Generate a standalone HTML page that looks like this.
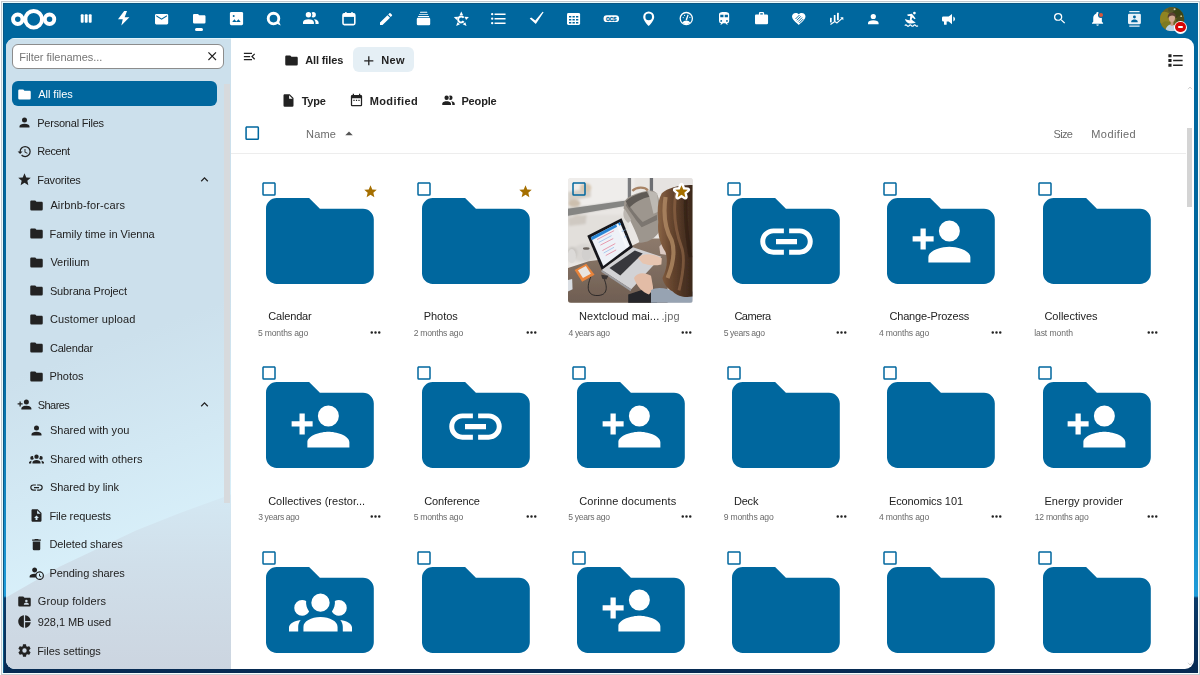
<!DOCTYPE html>
<html><head><meta charset="utf-8"><title>Files - Nextcloud</title>
<style>
*{box-sizing:border-box;margin:0;padding:0}
html,body{width:1200px;height:675px;overflow:hidden}
body{position:relative;font-family:"Liberation Sans",sans-serif;font-size:11px;color:#222;background:#00679e}
.ic{position:absolute;display:block;overflow:visible}
.abs{position:absolute}
.t{position:absolute;white-space:nowrap;filter:grayscale(1)}
#bg{position:absolute;left:0;top:0;width:1200px;height:675px;background:linear-gradient(180deg,#00679e 0,#00679e 360px,#1f9cd9 596px,#0b3b69 598px,#072a52 675px)}
#nav{position:absolute;left:6px;top:37.5px;width:225px;height:631.5px;border-radius:9px 0 0 9px;overflow:hidden;background:#cce0ec}
#nav:after{content:'';position:absolute;left:0;top:0;width:225px;height:1.2px;background:rgba(230,246,253,.8)}
#main{position:absolute;left:231px;top:37.5px;width:963px;height:631.5px;border-radius:0 9px 9px 0;background:#fff;overflow:hidden}
</style></head><body>
<div id="bg"></div>

<svg class="ic" style="left:11.1px;top:8.8px;width:45.3px;height:20.6px" viewBox="0 0 75.44 34.32"><g fill="none" stroke="#fff" stroke-width="6.54"><circle cx="37.77" cy="17.16" r="13.89"/><circle cx="11.24" cy="17.16" r="7.87"/><circle cx="64.2" cy="17.16" r="7.87"/></g></svg>
<svg class="ic" style="left:0;top:0;width:1200px;height:37.5px" viewBox="0 0 1200 37.5"><rect x="80.75" y="14.3" width="2.9" height="8.4" rx=".9" fill="#fff"/><rect x="84.75" y="14.3" width="2.9" height="8.4" rx=".9" fill="#fff"/><rect x="88.75" y="14.3" width="2.9" height="8.4" rx=".9" fill="#fff"/><rect x="229.9" y="12" width="13.2" height="13.2" rx="1.4" fill="#fff"/><circle cx="233.7" cy="16" r="1" fill="#00679e"/><path d="M232.2,22.1 L234.4,19.2 L236.3,21.6 L238.5,19.2 L240.7,22.1Z" fill="#00679e"/><circle cx="273.5" cy="18.6" r="5.3" fill="none" stroke="#fff" stroke-width="2.9"/><path d="M275.8,23.2 L280.7,25.4 L278.6,20.4Z" fill="#fff"/><rect x="343" y="13.7" width="11.8" height="10.9" rx="1.3" fill="none" stroke="#fff" stroke-width="1.6"/><rect x="343" y="13.7" width="11.8" height="3.2" fill="#fff"/><rect x="345" y="12" width="1.6" height="2.5" rx=".4" fill="#fff"/><rect x="351.2" y="12" width="1.6" height="2.5" rx=".4" fill="#fff"/><rect x="416.8" y="17.7" width="13.4" height="7.6" rx="1.2" fill="#fff"/><rect x="417.9" y="15.95" width="11.3" height=".95" rx=".4" fill="#fff"/><rect x="418.9" y="13.9" width="9.3" height=".95" rx=".4" fill="#fff"/><rect x="420" y="11.85" width="7.3" height=".95" rx=".4" fill="#fff"/><g fill="#fff"><path d="M461.3,11.6 L463.1,15.2 L459.5,15.2Z"/><path d="M453.8,16.9 L458.2,16.7 L456.6,19.9Z"/><path d="M468.9,16.9 L464.5,16.7 L466.1,19.9Z"/><path d="M456.2,25.9 L457.4,22.3 L460,24.2Z"/><path d="M466.5,25.9 L465.3,22.3 L462.7,24.2Z"/></g><path d="M463.6,17.7 A3,3 0 1 0 463.6,21.1" fill="none" stroke="#fff" stroke-width="2"/><path d="M529.7,18.6 L531.2,17.4 L535.3,20.6 L542.6,11.8 L543.6,12.3 L535.8,24Z" fill="#fff"/><rect x="567" y="13.1" width="13.1" height="11.9" rx="1.4" fill="#fff"/><rect x="569.0" y="16.0" width="2.3" height="1.5" fill="#00679e"/><rect x="569.0" y="19.0" width="2.3" height="1.5" fill="#00679e"/><rect x="569.0" y="22.0" width="2.3" height="1.5" fill="#00679e"/><rect x="572.5" y="16.0" width="2.3" height="1.5" fill="#00679e"/><rect x="572.5" y="19.0" width="2.3" height="1.5" fill="#00679e"/><rect x="572.5" y="22.0" width="2.3" height="1.5" fill="#00679e"/><rect x="576.0" y="16.0" width="2.3" height="1.5" fill="#00679e"/><rect x="576.0" y="19.0" width="2.3" height="1.5" fill="#00679e"/><rect x="576.0" y="22.0" width="2.3" height="1.5" fill="#00679e"/><rect x="603.5" y="15.3" width="15.6" height="6.7" rx="3.35" fill="#fff"/><text x="611.3" y="20.6" font-family="Liberation Sans" font-weight="bold" font-size="5.7" text-anchor="middle" fill="#00679e" stroke="#00679e" stroke-width=".35" textLength="10.6" lengthAdjust="spacingAndGlyphs">OCS</text><path d="M648.7,11.4 A5.5,5.5 0 0 1 654.2,16.9 C654.2,20.6 648.7,26 648.7,26 C648.7,26 643.2,20.6 643.2,16.9 A5.5,5.5 0 0 1 648.7,11.4Z M648.7,13.6 A3.3,3.3 0 1 0 648.7,20.2 A3.3,3.3 0 1 0 648.7,13.6Z" fill="#fff" fill-rule="evenodd"/><circle cx="686.3" cy="18.6" r="6.1" fill="none" stroke="#fff" stroke-width="1.3"/><path d="M682.3,22.6 A5,5 0 0 1 690.3,22.6 A5.4,5.4 0 0 1 682.3,22.6Z" fill="#fff"/><path d="M685.6,19.8 L687.6,14.6 L688.6,15 L687,20.3Z" fill="#fff"/><circle cx="683.2" cy="17.6" r=".55" fill="#fff"/><circle cx="684.6" cy="15.4" r=".55" fill="#fff"/><circle cx="689.9" cy="17.4" r=".55" fill="#fff"/><g fill="#fff"><rect x="830" y="17.8" width="1.7" height="4.6" rx=".5"/><rect x="833.8" y="15" width="1.7" height="6" rx=".5"/><rect x="837" y="12.7" width="1.8" height="7.5" rx=".5"/></g><path d="M830.8,24.2 L834.8,21.4 L837,22.9 L841.8,18.6" fill="none" stroke="#fff" stroke-width="1.2" stroke-linejoin="round" stroke-linecap="round"/><path d="M840.2,17.2 L843.3,17.2 L843.3,20.3Z" fill="#fff"/><g fill="#fff"><circle cx="914.4" cy="13.1" r="1.35"/><path d="M907.2,14.6 L911.8,13.8 L913.4,15.6 L915.6,18.6 L914.7,19.2 L912.4,17.4 L911.6,19.4 L913.3,21.6 L912.2,22.3 L909.8,19.9 L910.3,16 L907.8,15.9Z"/><path d="M904.9,18.9 C907,19.8 909.5,20.5 912,20.3 L915.8,22.5 C911,24.8 906,23.4 904.9,18.9Z"/><path d="M904.8,25.6 q1.1,-1.4 2.2,0 t2.2,0 t2.2,0 t2.2,0 t2.2,0 t2.1,0" fill="none" stroke="#fff" stroke-width="1.1"/></g></svg>
<svg class="ic" style="left:118.00px;top:11.40px;width:11.40px;height:14.60px" viewBox="2 1 12 14" preserveAspectRatio="none"><path fill="#fff" d="M8.5 1L2 9h5l-1.5 6L14 7H9l2.5-6z"/></svg>
<svg class="ic" style="left:154.80px;top:13.50px;width:13.20px;height:10.40px" viewBox="2 4 20 16" preserveAspectRatio="none"><path fill="#fff" d="M20,4H4C2.9,4 2,4.9 2,6V18C2,19.1 2.9,20 4,20H20C21.1,20 22,19.1 22,18V6C22,4.9 21.1,4 20,4M20,8L12,13L4,8V6L12,11L20,6V8Z"/></svg>
<svg class="ic" style="left:192.70px;top:13.90px;width:12.50px;height:9.40px" viewBox="2 4 20 16" preserveAspectRatio="none"><path fill="#fff" d="M10,4H4C2.89,4 2,4.89 2,6V18A2,2 0 0,0 4,20H20A2,2 0 0,0 22,18V8C22,6.89 21.1,6 20,6H12L10,4Z"/></svg>
<svg class="ic" style="left:303.40px;top:12.00px;width:15.60px;height:11.90px" viewBox="2 3.9999475479125977 20 15.000052452087402" preserveAspectRatio="none"><path fill="#fff" d="M16 17V19H2V17S2 13 9 13 16 17 16 17M12.5 7.5A3.5 3.5 0 1 0 9 11A3.5 3.5 0 0 0 12.5 7.5M15.94 13A5.32 5.32 0 0 1 18 17V19H22V17S22 13.37 15.94 13M15 4A3.39 3.39 0 0 0 13.07 4.59A5 5 0 0 1 13.07 10.41A3.39 3.39 0 0 0 15 11A3.5 3.5 0 0 0 15 4Z"/></svg>
<svg class="ic" style="left:380.00px;top:12.70px;width:12.20px;height:12.10px" viewBox="3 2.997499942779541 18.002500534057617 18.002500534057617" preserveAspectRatio="none"><path fill="#fff" d="M20.71,7.04C21.1,6.65 21.1,6 20.71,5.63L18.37,3.29C18,2.9 17.35,2.9 16.96,3.29L15.12,5.12L18.87,8.87M3,17.25V21H6.75L17.81,9.93L14.06,6.18L3,17.25Z"/></svg>
<svg class="ic" style="left:491.25px;top:13.00px;width:14.55px;height:11.30px" viewBox="2.5 4.5 18.5 15" preserveAspectRatio="none"><path fill="#fff" d="M7,5H21V7H7V5M7,13V11H21V13H7M4,4.5A1.5,1.5 0 0,1 5.5,6A1.5,1.5 0 0,1 4,7.5A1.5,1.5 0 0,1 2.5,6A1.5,1.5 0 0,1 4,4.5M4,10.5A1.5,1.5 0 0,1 5.5,12A1.5,1.5 0 0,1 4,13.5A1.5,1.5 0 0,1 2.5,12A1.5,1.5 0 0,1 4,10.5M7,19V17H21V19H7M4,16.5A1.5,1.5 0 0,1 5.5,18A1.5,1.5 0 0,1 4,19.5A1.5,1.5 0 0,1 2.5,18A1.5,1.5 0 0,1 4,16.5Z"/></svg>
<svg class="ic" style="left:718.80px;top:12.25px;width:10.20px;height:12.50px" viewBox="4 2 16 19" preserveAspectRatio="none"><path fill="#fff" d="M12,2C8,2 4,2.5 4,6V15.5A3.5,3.5 0 0,0 7.5,19L6,20.5V21H8.23L10.23,19H14L16,21H18V20.5L16.5,19A3.5,3.5 0 0,0 20,15.5V6C20,2.5 16.42,2 12,2M7.5,17A1.5,1.5 0 0,1 6,15.5A1.5,1.5 0 0,1 7.5,14A1.5,1.5 0 0,1 9,15.5A1.5,1.5 0 0,1 7.5,17M11,10H6V6H11V10M13,10V6H18V10H13M16.5,17A1.5,1.5 0 0,1 15,15.5A1.5,1.5 0 0,1 16.5,14A1.5,1.5 0 0,1 18,15.5A1.5,1.5 0 0,1 16.5,17Z"/></svg>
<svg class="ic" style="left:754.75px;top:12.00px;width:13.05px;height:12.20px" viewBox="2 2 20 19" preserveAspectRatio="none"><path fill="#fff" d="M10,2H14A2,2 0 0,1 16,4V6H20A2,2 0 0,1 22,8V19A2,2 0 0,1 20,21H4C2.89,21 2,20.1 2,19V8C2,6.89 2.89,6 4,6H8V4C8,2.89 8.89,2 10,2M14,6V4H10V6H14Z"/></svg>
<svg class="ic" style="left:792.10px;top:12.80px;width:13.50px;height:11.95px" viewBox="2 3 20 18.350000381469727" preserveAspectRatio="none"><path fill="#fff" d="M12,21.35L10.55,20.03C5.4,15.36 2,12.27 2,8.5C2,5.41 4.42,3 7.5,3C9.24,3 10.91,3.81 12,5.08C13.09,3.81 14.76,3 16.5,3C19.58,3 22,5.41 22,8.5C22,12.27 18.6,15.36 13.45,20.03L12,21.35Z"/></svg>
<svg class="ic" style="left:0;top:0;width:1200px;height:37.5px" viewBox="0 0 1200 37.5"><g stroke="#00679e" stroke-width=".95"><path d="M795.5,19 L799.5,15"/><path d="M796.8,20.3 L800.8,16.3"/><path d="M798.1,21.6 L802.1,17.6"/><path d="M799.4,22.9 L803.2,19.1"/></g></svg>
<svg class="ic" style="left:868.40px;top:13.70px;width:10.60px;height:10.20px" viewBox="4 4 16 16" preserveAspectRatio="none"><path fill="#fff" d="M12,4A4,4 0 0,1 16,8A4,4 0 0,1 12,12A4,4 0 0,1 8,8A4,4 0 0,1 12,4M12,14C16.42,14 20,15.79 20,18V20H4V18C4,15.79 7.58,14 12,14Z"/></svg>
<svg class="ic" style="left:942.00px;top:13.70px;width:13.00px;height:10.80px" viewBox="2 4 19.5 17" preserveAspectRatio="none"><path fill="#fff" d="M12,8H4A2,2 0 0,0 2,10V14A2,2 0 0,0 4,16H5V20A1,1 0 0,0 6,21H8A1,1 0 0,0 9,20V16H12L17,20V4L12,8M21.5,12C21.5,13.71 20.54,15.26 19,16V8C20.53,8.75 21.5,10.3 21.5,12Z"/></svg>
<div class="abs" style="left:195px;top:28px;width:7.7px;height:3.2px;border-radius:1.6px;background:#fff"></div>
<svg class="ic" style="left:1053.80px;top:13.30px;width:11.20px;height:10.60px" viewBox="3 3 17.5 17.5" preserveAspectRatio="none"><path fill="#fff" d="M9.5,3A6.5,6.5 0 0,1 16,9.5C16,11.11 15.41,12.59 14.44,13.73L14.71,14H15.5L20.5,19L19,20.5L14,15.5V14.71L13.73,14.44C12.59,15.41 11.11,16 9.5,16A6.5,6.5 0 0,1 3,9.5A6.5,6.5 0 0,1 9.5,3M9.5,5C7,5 5,7 5,9.5C5,12 7,14 9.5,14C12,14 14,12 14,9.5C14,7 12,5 9.5,5Z"/></svg>
<svg class="ic" style="left:1091.80px;top:12.30px;width:11.10px;height:13.70px" viewBox="3 2 18 21" preserveAspectRatio="none"><path fill="#fff" d="M21,19V20H3V19L5,17V11C5,7.9 7.03,5.17 10,4.29C10,4.19 10,4.1 10,4A2,2 0 0,1 12,2A2,2 0 0,1 14,4C14,4.1 14,4.19 14,4.29C16.97,5.17 19,7.9 19,11V17L21,19M14,21A2,2 0 0,1 12,23A2,2 0 0,1 10,21"/></svg>
<div class="abs" style="left:1098.7px;top:13.2px;width:4.3px;height:4.3px;border-radius:3px;background:#d8563a;box-shadow:0 0 0 1px #00679e"></div>
<svg class="ic" style="left:1128.30px;top:10.75px;width:12.90px;height:15.75px" viewBox="2 0 20 24" preserveAspectRatio="none"><path fill="#eaf2f8" d="M20,0H4V2H20V0M4,24H20V22H4V24M20,4H4A2,2 0 0,0 2,6V18A2,2 0 0,0 4,20H20A2,2 0 0,0 22,18V6A2,2 0 0,0 20,4M12,6.75A2.25,2.25 0 0,1 14.25,9A2.25,2.25 0 0,1 12,11.25A2.25,2.25 0 0,1 9.75,9A2.25,2.25 0 0,1 12,6.75M17,17H7V15.5C7,13.83 10.33,13 12,13C13.67,13 17,13.83 17,15.5V17Z"/></svg>
<svg class="ic" style="left:1160.1px;top:6.5px;width:24.2px;height:24.4px" viewBox="0 0 24 24"><defs><clipPath id="av"><circle cx="12" cy="12" r="12"/></clipPath><filter id="avb" x="-20%" y="-20%" width="140%" height="140%"><feGaussianBlur stdDeviation=".55"/></filter></defs><g clip-path="url(#av)"><rect width="24" height="24" fill="#6a6424"/><g filter="url(#avb)"><circle cx="4.5" cy="11" r="6.5" fill="#8f8424"/><circle cx="6" cy="19" r="5" fill="#7d7a22"/><circle cx="18" cy="5" r="6" fill="#3a4419"/><circle cx="20.5" cy="13" r="4.5" fill="#4a4c1e"/><circle cx="11" cy="2.5" r="3" fill="#55592a"/><circle cx="14.5" cy="2.2" r="1" fill="#d9d6b0"/><circle cx="21" cy="9" r=".9" fill="#cfc98f"/><path d="M5.2,24 C6,19 9,17.2 12,17.4 C15.5,17.6 18,19.5 18.8,24Z" fill="#bdd2e2"/><path d="M10.4,14 L13.4,14 L13.2,18.4 L10.6,18.4Z" fill="#c59a80"/><ellipse cx="11.8" cy="10.6" rx="3.1" ry="4.2" fill="#d2aa92"/><path d="M7.8,11.2 C6.4,3.6 17,3.2 15.9,11.2 C15,7.4 9.4,7.2 7.8,11.2Z" fill="#5a4130"/></g></g></svg>
<div class="abs" style="left:1174px;top:20.5px;width:13px;height:13px;border-radius:50%;background:#fff"></div>
<div class="abs" style="left:1175.3px;top:21.8px;width:10.4px;height:10.4px;border-radius:50%;background:#d60505"></div>
<div class="abs" style="left:1177.7px;top:26.05px;width:5.6px;height:1.9px;border-radius:.9px;background:#fff"></div>
<div id="nav">
<div class="abs" style="left:0;top:0;width:225px;height:631.5px;background:linear-gradient(160deg,#cce0ec 0,#cce0ec 48%,#d9f1fb 82%)"></div>
<svg class="ic" style="left:0;top:0;width:225px;height:631.5px" viewBox="6 37.5 225 631.5"><defs><linearGradient id="ng" x1="0" y1="0" x2="0" y2="1"><stop offset="0" stop-color="#d4e8f3"/><stop offset=".4" stop-color="#d0dfea"/><stop offset="1" stop-color="#ccd5e0"/></linearGradient></defs><path d="M6,597 L60,566 L136,530 L180,512.5 L224,496.5 L231,494 V669 H6Z" fill="url(#ng)"/></svg>
</div>
<div class="abs" style="left:224px;top:83.8px;width:5.9px;height:418.8px;background:#d7dadd"></div>
<div class="abs" style="left:12.3px;top:43.75px;width:212.2px;height:25px;border-radius:6px;border:1.2px solid #8c8c8c;background:#fff"></div>
<div class="t" style="left:19.20px;top:48.79px;line-height:16px;height:16px;font-size:11px;color:#757575;letter-spacing:-0.031px">Filter filenames...</div>
<svg class="ic" style="left:208.20px;top:52.40px;width:8.40px;height:8.40px" viewBox="5 5 14 14" preserveAspectRatio="none"><path fill="#222" d="M19,6.41L17.59,5L12,10.59L6.41,5L5,6.41L10.59,12L5,17.59L6.41,19L12,13.41L17.59,19L19,17.59L13.41,12L19,6.41Z"/></svg>
<div class="abs" style="left:12.3px;top:81.10px;width:204.5px;height:25.3px;border-radius:6px;background:#00679e"></div>
<svg class="ic" style="left:17.20px;top:86.50px;width:15px;height:15px" viewBox="0 0 24 24"><path fill="#fff" fill-rule="nonzero" d="M10,4H4C2.89,4 2,4.89 2,6V18A2,2 0 0,0 4,20H20A2,2 0 0,0 22,18V8C22,6.89 21.1,6 20,6H12L10,4Z"/></svg>
<div class="t" style="left:38.20px;top:86.09px;line-height:16px;height:16px;font-size:11px;color:#fff;letter-spacing:-0.025px">All files</div>
<svg class="ic" style="left:17.20px;top:115.00px;width:15px;height:15px" viewBox="0 0 24 24"><path fill="#222" fill-rule="nonzero" d="M12,4A4,4 0 0,1 16,8A4,4 0 0,1 12,12A4,4 0 0,1 8,8A4,4 0 0,1 12,4M12,14C16.42,14 20,15.79 20,18V20H4V18C4,15.79 7.58,14 12,14Z"/></svg>
<div class="t" style="left:37.20px;top:114.59px;line-height:16px;height:16px;font-size:11px;color:#222;letter-spacing:-0.219px">Personal Files</div>
<svg class="ic" style="left:17.20px;top:143.50px;width:15px;height:15px" viewBox="0 0 24 24"><path fill="#222" fill-rule="nonzero" d="M13.5,8H12V13L16.28,15.54L17,14.33L13.5,12.25V8M13,3A9,9 0 0,0 4,12H1L4.96,16.03L9,12H6A7,7 0 0,1 13,5A7,7 0 0,1 20,12A7,7 0 0,1 13,19C11.07,19 9.32,18.21 8.06,16.94L6.64,18.36C8.27,20 10.5,21 13,21A9,9 0 0,0 22,12A9,9 0 0,0 13,3"/></svg>
<div class="t" style="left:37.20px;top:143.09px;line-height:16px;height:16px;font-size:11px;color:#222;letter-spacing:-0.390px">Recent</div>
<svg class="ic" style="left:17.20px;top:172.00px;width:15px;height:15px" viewBox="0 0 24 24"><path fill="#222" fill-rule="nonzero" d="M12,17.27L18.18,21L16.54,13.97L22,9.24L14.81,8.62L12,2L9.19,8.62L2,9.24L7.45,13.97L5.82,21L12,17.27Z"/></svg>
<div class="t" style="left:37.20px;top:171.59px;line-height:16px;height:16px;font-size:11px;color:#222;letter-spacing:-0.200px">Favorites</div>
<svg class="ic" style="left:196.50px;top:171.60px;width:15px;height:15px" viewBox="0 0 24 24"><path fill="#222" fill-rule="nonzero" d="M7.41,15.41L12,10.83L16.59,15.41L18,14L12,8L6,14L7.41,15.41Z"/></svg>
<svg class="ic" style="left:29.20px;top:197.50px;width:15px;height:15px" viewBox="0 0 24 24"><path fill="#222" fill-rule="nonzero" d="M10,4H4C2.89,4 2,4.89 2,6V18A2,2 0 0,0 4,20H20A2,2 0 0,0 22,18V8C22,6.89 21.1,6 20,6H12L10,4Z"/></svg>
<div class="t" style="left:50.40px;top:197.09px;line-height:16px;height:16px;font-size:11px;color:#222;letter-spacing:0.129px">Airbnb-for-cars</div>
<svg class="ic" style="left:29.20px;top:226.00px;width:15px;height:15px" viewBox="0 0 24 24"><path fill="#222" fill-rule="nonzero" d="M10,4H4C2.89,4 2,4.89 2,6V18A2,2 0 0,0 4,20H20A2,2 0 0,0 22,18V8C22,6.89 21.1,6 20,6H12L10,4Z"/></svg>
<div class="t" style="left:49.40px;top:225.59px;line-height:16px;height:16px;font-size:11px;color:#222;letter-spacing:0.020px">Family time in Vienna</div>
<svg class="ic" style="left:29.20px;top:254.50px;width:15px;height:15px" viewBox="0 0 24 24"><path fill="#222" fill-rule="nonzero" d="M10,4H4C2.89,4 2,4.89 2,6V18A2,2 0 0,0 4,20H20A2,2 0 0,0 22,18V8C22,6.89 21.1,6 20,6H12L10,4Z"/></svg>
<div class="t" style="left:50.40px;top:254.09px;line-height:16px;height:16px;font-size:11px;color:#222;letter-spacing:-0.014px">Verilium</div>
<svg class="ic" style="left:29.20px;top:283.00px;width:15px;height:15px" viewBox="0 0 24 24"><path fill="#222" fill-rule="nonzero" d="M10,4H4C2.89,4 2,4.89 2,6V18A2,2 0 0,0 4,20H20A2,2 0 0,0 22,18V8C22,6.89 21.1,6 20,6H12L10,4Z"/></svg>
<div class="t" style="left:49.90px;top:282.59px;line-height:16px;height:16px;font-size:11px;color:#222;letter-spacing:-0.125px">Subrana Project</div>
<svg class="ic" style="left:29.20px;top:311.50px;width:15px;height:15px" viewBox="0 0 24 24"><path fill="#222" fill-rule="nonzero" d="M10,4H4C2.89,4 2,4.89 2,6V18A2,2 0 0,0 4,20H20A2,2 0 0,0 22,18V8C22,6.89 21.1,6 20,6H12L10,4Z"/></svg>
<div class="t" style="left:49.90px;top:311.09px;line-height:16px;height:16px;font-size:11px;color:#222;letter-spacing:0.121px">Customer upload</div>
<svg class="ic" style="left:29.20px;top:340.00px;width:15px;height:15px" viewBox="0 0 24 24"><path fill="#222" fill-rule="nonzero" d="M10,4H4C2.89,4 2,4.89 2,6V18A2,2 0 0,0 4,20H20A2,2 0 0,0 22,18V8C22,6.89 21.1,6 20,6H12L10,4Z"/></svg>
<div class="t" style="left:49.90px;top:339.59px;line-height:16px;height:16px;font-size:11px;color:#222;letter-spacing:-0.200px">Calendar</div>
<svg class="ic" style="left:29.20px;top:368.50px;width:15px;height:15px" viewBox="0 0 24 24"><path fill="#222" fill-rule="nonzero" d="M10,4H4C2.89,4 2,4.89 2,6V18A2,2 0 0,0 4,20H20A2,2 0 0,0 22,18V8C22,6.89 21.1,6 20,6H12L10,4Z"/></svg>
<div class="t" style="left:49.40px;top:368.09px;line-height:16px;height:16px;font-size:11px;color:#222;letter-spacing:-0.020px">Photos</div>
<svg class="ic" style="left:17.20px;top:397.00px;width:15px;height:15px" viewBox="0 0 24 24"><path fill="#222" fill-rule="nonzero" d="M15,14C12.33,14 7,15.33 7,18V20H23V18C23,15.33 17.67,14 15,14M6,10V7H4V10H1V12H4V15H6V12H9V10M15,12A4,4 0 0,0 19,8A4,4 0 0,0 15,4A4,4 0 0,0 11,8A4,4 0 0,0 15,12Z"/></svg>
<div class="t" style="left:37.70px;top:396.59px;line-height:16px;height:16px;font-size:11px;color:#222;letter-spacing:-0.540px">Shares</div>
<svg class="ic" style="left:196.50px;top:396.60px;width:15px;height:15px" viewBox="0 0 24 24"><path fill="#222" fill-rule="nonzero" d="M7.41,15.41L12,10.83L16.59,15.41L18,14L12,8L6,14L7.41,15.41Z"/></svg>
<svg class="ic" style="left:29.20px;top:422.70px;width:15px;height:15px" viewBox="0 0 24 24"><path fill="#222" fill-rule="nonzero" d="M12,4A4,4 0 0,1 16,8A4,4 0 0,1 12,12A4,4 0 0,1 8,8A4,4 0 0,1 12,4M12,14C16.42,14 20,15.79 20,18V20H4V18C4,15.79 7.58,14 12,14Z"/></svg>
<div class="t" style="left:49.90px;top:422.29px;line-height:16px;height:16px;font-size:11px;color:#222;letter-spacing:0.046px">Shared with you</div>
<svg class="ic" style="left:29.20px;top:451.20px;width:15px;height:15px" viewBox="0 0 24 24"><path fill="#222" fill-rule="nonzero" d="M12,5.5A3.5,3.5 0 0,1 15.5,9A3.5,3.5 0 0,1 12,12.5A3.5,3.5 0 0,1 8.5,9A3.5,3.5 0 0,1 12,5.5M5,8C5.56,8 6.08,8.15 6.53,8.42C6.38,9.85 6.8,11.27 7.66,12.38C7.16,13.34 6.16,14 5,14A3,3 0 0,1 2,11A3,3 0 0,1 5,8M19,8A3,3 0 0,1 22,11A3,3 0 0,1 19,14C17.84,14 16.84,13.34 16.34,12.38C17.2,11.27 17.62,9.85 17.47,8.42C17.92,8.15 18.44,8 19,8M5.5,18.25C5.5,16.18 8.41,14.5 12,14.5C15.59,14.5 18.5,16.18 18.5,18.25V20H5.5V18.25M0,20V18.5C0,17.11 1.89,15.94 4.45,15.6C3.86,16.28 3.5,17.22 3.5,18.25V20H0M24,20H20.5V18.25C20.5,17.22 20.14,16.28 19.55,15.6C22.11,15.94 24,17.11 24,18.5V20Z"/></svg>
<div class="t" style="left:49.90px;top:450.79px;line-height:16px;height:16px;font-size:11px;color:#222;letter-spacing:0.050px">Shared with others</div>
<svg class="ic" style="left:29.20px;top:479.70px;width:15px;height:15px" viewBox="0 0 24 24"><path fill="#222" fill-rule="nonzero" d="M3.9,12C3.9,10.29 5.29,8.9 7,8.9H11V7H7A5,5 0 0,0 2,12A5,5 0 0,0 7,17H11V15.1H7C5.29,15.1 3.9,13.71 3.9,12M8,13H16V11H8V13M17,7H13V8.9H17C18.71,8.9 20.1,10.29 20.1,12C20.1,13.71 18.71,15.1 17,15.1H13V17H17A5,5 0 0,0 22,12A5,5 0 0,0 17,7Z"/></svg>
<div class="t" style="left:49.90px;top:479.29px;line-height:16px;height:16px;font-size:11px;color:#222;letter-spacing:-0.042px">Shared by link</div>
<svg class="ic" style="left:29.20px;top:508.20px;width:15px;height:15px" viewBox="0 0 24 24"><path fill="#222" fill-rule="nonzero" d="M14,2H6C4.89,2 4,2.89 4,4V20C4,21.11 4.89,22 6,22H18C19.11,22 20,21.11 20,20V8L14,2M13.5,16V19H10.5V16H8L12,12L16,16H13.5M13,9V3.5L18.5,9H13Z"/></svg>
<div class="t" style="left:49.40px;top:507.79px;line-height:16px;height:16px;font-size:11px;color:#222;letter-spacing:-0.112px">File requests</div>
<svg class="ic" style="left:29.20px;top:536.70px;width:15px;height:15px" viewBox="0 0 24 24"><path fill="#222" fill-rule="nonzero" d="M19,4H15.5L14.5,3H9.5L8.5,4H5V6H19M6,19A2,2 0 0,0 8,21H16A2,2 0 0,0 18,19V7H6V19Z"/></svg>
<div class="t" style="left:49.40px;top:536.29px;line-height:16px;height:16px;font-size:11px;color:#222;letter-spacing:-0.050px">Deleted shares</div>
<svg class="ic" style="left:29.20px;top:565.20px;width:15px;height:15px" viewBox="0 0 24 24"><path fill="#222" fill-rule="nonzero" d="M10.63,14.1C12.23,10.58 16.38,9.03 19.9,10.63C23.42,12.23 24.97,16.38 23.37,19.9C22.24,22.4 19.75,24 17,24C14.3,24 11.83,22.44 10.67,20H1V18C1.06,16.86 1.84,15.93 3.34,15.18C4.84,14.43 6.72,14.04 9,14C9.57,14 10.11,14.05 10.63,14.1V14.1M9,4C10.12,4.03 11.06,4.42 11.81,5.17C12.56,5.92 12.93,6.86 12.93,8C12.93,9.14 12.56,10.08 11.81,10.83C11.06,11.58 10.12,11.95 9,11.95C7.88,11.95 6.94,11.58 6.19,10.83C5.44,10.08 5.07,9.14 5.07,8C5.07,6.86 5.44,5.92 6.19,5.17C6.94,4.42 7.88,4.03 9,4M17,22A5,5 0 0,0 22,17A5,5 0 0,0 17,12A5,5 0 0,0 12,17A5,5 0 0,0 17,22M16,14H17.5V16.82L19.94,18.23L19.19,19.53L16,17.69V14Z"/></svg>
<div class="t" style="left:49.40px;top:564.79px;line-height:16px;height:16px;font-size:11px;color:#222;letter-spacing:-0.085px">Pending shares</div>
<svg class="ic" style="left:17.20px;top:593.50px;width:15px;height:15px" viewBox="0 0 24 24"><path fill="#222" fill-rule="nonzero" d="M19,17H11V16C11,14.67 13.67,14 15,14C16.33,14 19,14.67 19,16M15,9A2,2 0 0,1 17,11A2,2 0 0,1 15,13C13.89,13 13,12.1 13,11C13,9.89 13.9,9 15,9M20,6H12L10,4H4C2.89,4 2,4.89 2,6V18A2,2 0 0,0 4,20H20A2,2 0 0,0 22,18V8C22,6.89 21.1,6 20,6Z"/></svg>
<div class="t" style="left:37.70px;top:593.09px;line-height:16px;height:16px;font-size:11px;color:#222;letter-spacing:0.138px">Group folders</div>
<svg class="ic" style="left:17.20px;top:614.20px;width:15px;height:15px" viewBox="0 0 24 24"><path fill="#222" fill-rule="nonzero" d="M11,2V22C5.9,21.5 2,17.2 2,12C2,6.8 5.9,2.5 11,2M13,2V11H22C21.5,6.2 17.8,2.5 13,2M13,13V22C17.7,21.5 21.5,17.8 22,13H13Z"/></svg>
<div class="t" style="left:37.70px;top:613.79px;line-height:16px;height:16px;font-size:11px;color:#222;letter-spacing:-0.054px">928,1 MB used</div>
<svg class="ic" style="left:17.20px;top:643.00px;width:15px;height:15px" viewBox="0 0 24 24"><path fill="#222" fill-rule="nonzero" d="M12,15.5A3.5,3.5 0 0,1 8.5,12A3.5,3.5 0 0,1 12,8.5A3.5,3.5 0 0,1 15.5,12A3.5,3.5 0 0,1 12,15.5M19.43,12.97C19.47,12.65 19.5,12.33 19.5,12C19.5,11.67 19.47,11.34 19.43,11L21.54,9.37C21.73,9.22 21.78,8.95 21.66,8.73L19.66,5.27C19.54,5.05 19.27,4.96 19.05,5.05L16.56,6.05C16.04,5.66 15.5,5.32 14.87,5.07L14.5,2.42C14.46,2.18 14.25,2 14,2H10C9.75,2 9.54,2.18 9.5,2.42L9.13,5.07C8.5,5.32 7.96,5.66 7.44,6.05L4.95,5.05C4.73,4.96 4.46,5.05 4.34,5.27L2.34,8.73C2.21,8.95 2.27,9.22 2.46,9.37L4.57,11C4.53,11.34 4.5,11.67 4.5,12C4.5,12.33 4.53,12.65 4.57,12.97L2.46,14.63C2.27,14.78 2.21,15.05 2.34,15.27L4.34,18.73C4.46,18.95 4.73,19.03 4.95,18.95L7.44,17.94C7.96,18.34 8.5,18.68 9.13,18.93L9.5,21.58C9.54,21.82 9.75,22 10,22H14C14.25,22 14.46,21.82 14.5,21.58L14.87,18.93C15.5,18.67 16.04,18.34 16.56,17.94L19.05,18.95C19.27,19.03 19.54,18.95 19.66,18.73L21.66,15.27C21.78,15.05 21.73,14.78 21.54,14.63L19.43,12.97Z"/></svg>
<div class="t" style="left:37.20px;top:642.59px;line-height:16px;height:16px;font-size:11px;color:#222;letter-spacing:-0.042px">Files settings</div>
<div id="main"></div>
<svg class="ic" style="left:241.90px;top:48.90px;width:15px;height:15px" viewBox="0 0 24 24"><path fill="#222" fill-rule="nonzero" d="M21,15.61L19.59,17L14.58,12L19.59,7L21,8.39L17.44,12L21,15.61M3,6H16V8H3V6M3,13V11H13V13H3M3,18V16H16V18H3Z"/></svg>
<svg class="ic" style="left:284.20px;top:52.50px;width:15px;height:15px" viewBox="0 0 24 24"><path fill="#222" fill-rule="nonzero" d="M10,4H4C2.89,4 2,4.89 2,6V18A2,2 0 0,0 4,20H20A2,2 0 0,0 22,18V8C22,6.89 21.1,6 20,6H12L10,4Z"/></svg>
<div class="t" style="left:305.15px;top:52.49px;line-height:16px;height:16px;font-size:11px;color:#222;letter-spacing:-0.125px;font-weight:bold">All files</div>
<div class="abs" style="left:352.8px;top:47.2px;width:61px;height:25.3px;border-radius:6px;background:#e5eff5"></div>
<svg class="ic" style="left:360.50px;top:52.50px;width:15.6px;height:15.6px" viewBox="0 0 24 24"><path fill="#222" fill-rule="nonzero" d="M19,13H13V19H11V13H5V11H11V5H13V11H19V13Z"/></svg>
<div class="t" style="left:381.35px;top:52.49px;line-height:16px;height:16px;font-size:11px;color:#222;letter-spacing:0.250px;font-weight:bold">New</div>
<svg class="ic" style="left:1165.70px;top:50.50px;width:19px;height:19px" viewBox="0 0 24 24"><path fill="#222" fill-rule="nonzero" d="M3,4H7V8H3V4M9,5V7H21V5H9M3,10H7V14H3V10M9,11V13H21V11H9M3,16H7V20H3V16M9,17V19H21V17H9"/></svg>
<svg class="ic" style="left:280.70px;top:92.90px;width:15px;height:15px" viewBox="0 0 24 24"><path fill="#222" fill-rule="nonzero" d="M13,9V3.5L18.5,9M6,2C4.89,2 4,2.89 4,4V20A2,2 0 0,0 6,22H18A2,2 0 0,0 20,20V8L14,2H6Z"/></svg>
<div class="t" style="left:301.70px;top:92.99px;line-height:16px;height:16px;font-size:11px;color:#222;letter-spacing:-0.267px;font-weight:bold">Type</div>
<svg class="ic" style="left:349.35px;top:93.10px;width:15px;height:15px" viewBox="0 0 24 24"><path fill="#222" fill-rule="evenodd" d="M5,3H6V1H8V3H16V1H18V3H19A2,2 0 0 1 21,5V19A2,2 0 0 1 19,21H5A2,2 0 0 1 3,19V5A2,2 0 0 1 5,3Z M5,8.5V19H19V8.5Z M7,10.8H9V12.8H7Z M11,10.8H13V12.8H11Z M15,10.8H17V12.8H15Z"/></svg>
<div class="t" style="left:369.65px;top:92.99px;line-height:16px;height:16px;font-size:11px;color:#222;letter-spacing:0.421px;font-weight:bold">Modified</div>
<svg class="ic" style="left:441.00px;top:92.70px;width:15px;height:15px" viewBox="0 0 24 24"><path fill="#222" fill-rule="nonzero" d="M16 17V19H2V17S2 13 9 13 16 17 16 17M12.5 7.5A3.5 3.5 0 1 0 9 11A3.5 3.5 0 0 0 12.5 7.5M15.94 13A5.32 5.32 0 0 1 18 17V19H22V17S22 13.37 15.94 13M15 4A3.39 3.39 0 0 0 13.07 4.59A5 5 0 0 1 13.07 10.41A3.39 3.39 0 0 0 15 11A3.5 3.5 0 0 0 15 4Z"/></svg>
<div class="t" style="left:461.45px;top:92.99px;line-height:16px;height:16px;font-size:11px;color:#222;letter-spacing:-0.160px;font-weight:bold">People</div>
<svg class="ic" style="left:242.70px;top:124.40px;width:18.4px;height:18.4px" viewBox="0 0 24 24"><path fill="#00679e" fill-rule="nonzero" d="M19,3H5C3.89,3 3,3.89 3,5V19A2,2 0 0,0 5,21H19A2,2 0 0,0 21,19V5C21,3.89 20.1,3 19,3M19,5V19H5V5H19Z"/></svg>
<div class="t" style="left:306.00px;top:126.09px;line-height:16px;height:16px;font-size:11px;color:#6b6b6b;letter-spacing:0.200px">Name</div>
<svg class="ic" style="left:339.60px;top:124.20px;width:18px;height:18px" viewBox="0 0 24 24"><path fill="#555" fill-rule="nonzero" d="M7,15L12,10L17,15H7Z"/></svg>
<div class="t" style="left:1053.60px;top:126.09px;line-height:16px;height:16px;font-size:11px;color:#6b6b6b;letter-spacing:-0.700px">Size</div>
<div class="t" style="left:1091.30px;top:126.09px;line-height:16px;height:16px;font-size:11px;color:#6b6b6b;letter-spacing:0.400px">Modified</div>
<div class="abs" style="left:231px;top:153.3px;width:955px;height:1px;background:#ededed"></div>
<div class="abs" style="left:1187.2px;top:128.3px;width:5px;height:79px;background:#d4d4d4"></div>
<svg class="ic" style="left:1186.5px;top:84px;width:6px;height:584px" viewBox="0 0 6 584"><path d="M1,5.2 L3,3 L5,5.2" fill="none" stroke="#d0d0d0" stroke-width="1"/><path d="M1,578.8 L3,581 L5,578.8" fill="none" stroke="#d0d0d0" stroke-width="1"/></svg>
<svg class="ic" style="left:266.40px;top:197.60px;width:107.80px;height:85.90px" viewBox="2 4 20 16" preserveAspectRatio="none"><path fill="#00679e" d="M10,4H4C2.89,4 2,4.89 2,6V18A2,2 0 0,0 4,20H20A2,2 0 0,0 22,18V8C22,6.89 21.1,6 20,6H12L10,4Z"/></svg>
<svg class="ic" style="left:259.50px;top:179.80px;width:18px;height:18px" viewBox="0 0 24 24"><path fill="#00679e" fill-rule="nonzero" d="M19,3H5C3.89,3 3,3.89 3,5V19A2,2 0 0,0 5,21H19A2,2 0 0,0 21,19V5C21,3.89 20.1,3 19,3M19,5V19H5V5H19Z"/></svg>
<svg class="ic" style="left:362.90px;top:184.30px;width:15px;height:15px" viewBox="0 0 24 24"><path fill="#a56f00" fill-rule="nonzero" d="M12,17.27L18.18,21L16.54,13.97L22,9.24L14.81,8.62L12,2L9.19,8.62L2,9.24L7.45,13.97L5.82,21L12,17.27Z"/></svg>
<div class="t" style="left:268.15px;top:308.09px;line-height:16px;height:16px;font-size:11px;color:#222;letter-spacing:-0.150px">Calendar</div>
<div class="t" style="left:257.90px;top:324.72px;line-height:16px;height:16px;font-size:8.6px;color:#6b6b6b;letter-spacing:-0.164px">5 months ago</div>
<svg class="ic" style="left:368.25px;top:324.50px;width:15px;height:15px" viewBox="0 0 24 24"><path fill="#222" fill-rule="nonzero" d="M16,12A2,2 0 0,1 18,10A2,2 0 0,1 20,12A2,2 0 0,1 18,14A2,2 0 0,1 16,12M10,12A2,2 0 0,1 12,10A2,2 0 0,1 14,12A2,2 0 0,1 12,14A2,2 0 0,1 10,12M4,12A2,2 0 0,1 6,10A2,2 0 0,1 8,12A2,2 0 0,1 6,14A2,2 0 0,1 4,12Z"/></svg>
<svg class="ic" style="left:421.65px;top:197.60px;width:107.80px;height:85.90px" viewBox="2 4 20 16" preserveAspectRatio="none"><path fill="#00679e" d="M10,4H4C2.89,4 2,4.89 2,6V18A2,2 0 0,0 4,20H20A2,2 0 0,0 22,18V8C22,6.89 21.1,6 20,6H12L10,4Z"/></svg>
<svg class="ic" style="left:414.75px;top:179.80px;width:18px;height:18px" viewBox="0 0 24 24"><path fill="#00679e" fill-rule="nonzero" d="M19,3H5C3.89,3 3,3.89 3,5V19A2,2 0 0,0 5,21H19A2,2 0 0,0 21,19V5C21,3.89 20.1,3 19,3M19,5V19H5V5H19Z"/></svg>
<svg class="ic" style="left:518.15px;top:184.30px;width:15px;height:15px" viewBox="0 0 24 24"><path fill="#a56f00" fill-rule="nonzero" d="M12,17.27L18.18,21L16.54,13.97L22,9.24L14.81,8.62L12,2L9.19,8.62L2,9.24L7.45,13.97L5.82,21L12,17.27Z"/></svg>
<div class="t" style="left:423.65px;top:308.09px;line-height:16px;height:16px;font-size:11px;color:#222;letter-spacing:-0.010px">Photos</div>
<div class="t" style="left:413.65px;top:324.72px;line-height:16px;height:16px;font-size:8.6px;color:#6b6b6b;letter-spacing:-0.232px">2 months ago</div>
<svg class="ic" style="left:523.50px;top:324.50px;width:15px;height:15px" viewBox="0 0 24 24"><path fill="#222" fill-rule="nonzero" d="M16,12A2,2 0 0,1 18,10A2,2 0 0,1 20,12A2,2 0 0,1 18,14A2,2 0 0,1 16,12M10,12A2,2 0 0,1 12,10A2,2 0 0,1 14,12A2,2 0 0,1 12,14A2,2 0 0,1 10,12M4,12A2,2 0 0,1 6,10A2,2 0 0,1 8,12A2,2 0 0,1 6,14A2,2 0 0,1 4,12Z"/></svg>
<svg class="ic" style="left:568.3px;top:177.9px;width:124.5px;height:124.8px;border-radius:3px;overflow:hidden" viewBox="40 38 600 602" preserveAspectRatio="none"><defs>
<filter id="pb1" x="-5%" y="-5%" width="110%" height="110%"><feGaussianBlur stdDeviation="5"/></filter>
<filter id="pb2" x="-5%" y="-5%" width="110%" height="110%"><feGaussianBlur stdDeviation="2.2"/></filter>
<linearGradient id="hair" x1="0" y1="0" x2="1" y2="0"><stop offset="0" stop-color="#8a6446"/><stop offset=".35" stop-color="#6a4830"/><stop offset=".7" stop-color="#4e3424"/><stop offset="1" stop-color="#3c281c"/></linearGradient>
<linearGradient id="wood" x1="0" y1="0" x2="0" y2="1"><stop offset="0" stop-color="#8d7a6c"/><stop offset="1" stop-color="#6f5e52"/></linearGradient>
</defs>
<rect x="40" y="38" width="600" height="602" fill="#e9e6e3"/>
<g filter="url(#pb1)">
  <!-- blurry background room -->
  <rect x="30" y="30" width="330" height="140" fill="#efedeb"/>
  <rect x="30" y="215" width="300" height="230" fill="#e2dfdb"/>
  <path d="M40,105 L150,85 L150,130 L40,150Z" fill="#d6cfc6"/><ellipse cx="125" cy="85" rx="28" ry="22" fill="#d9c9b4"/><ellipse cx="70" cy="160" rx="30" ry="18" fill="#cdbfae"/><ellipse cx="90" cy="240" rx="35" ry="22" fill="#cfc4b6"/>
  <path d="M30,220 L310,170 L310,150 L30,190Z" fill="#8f8e8b"/>
  <path d="M40,230 L130,215 L125,260 L45,270Z" fill="#cfc9c2"/>
  <rect x="440" y="30" width="210" height="80" fill="#e6e3e1"/>
  <ellipse cx="120" cy="400" rx="60" ry="45" fill="#d8d5d2"/>
  <ellipse cx="60" cy="400" rx="25" ry="30" fill="#c9c6c2"/>
</g>
<g filter="url(#pb2)">
  <!-- window frames -->
  <rect x="328" y="30" width="16" height="125" fill="#7b7d80"/>
  <rect x="434" y="30" width="16" height="80" fill="#6c6e72"/>
  <path d="M40,186 L320,146 L320,172 L40,220Z" fill="#858583"/>
  <!-- table -->
  <path d="M40,472 L140,440 L215,430 L420,330 L520,330 L520,640 L40,640Z" fill="url(#wood)"/>
  <path d="M330,600 L450,560 L470,640 L330,640Z" fill="#26262a"/>
  <!-- backpack -->
  <path d="M350,100 C370,80 410,80 425,98" fill="none" stroke="#a88466" stroke-width="11"/>
  <path d="M312,150 C330,120 400,100 440,98 C470,100 482,130 480,180 L478,300 C450,340 410,352 385,350 C370,300 330,220 308,185Z" fill="#9d968e"/>
  <path d="M318,170 C360,230 380,260 395,275 L470,240 L468,215 L400,250 C370,220 340,180 325,155Z" fill="#7c766f"/>
  <path d="M425,98 L470,110 L478,200 L452,210Z" fill="#bdb9b3"/><path d="M318,150 C340,125 390,108 420,104 L432,128 C400,135 360,155 335,182Z" fill="#5f5a55"/>
  <path d="M312,185 C300,215 310,240 330,255 L345,240Z" fill="#bdb8b2"/>
  <!-- laptop screen -->
  <path d="M133,316 L298,232 L353,372 L203,482Z" fill="#17171a"/>
  <path d="M150,324 L290,252 L338,366 L210,462Z" fill="#eef1f7"/>
  <path d="M150,324 L290,252 L295,264 L155,338Z" fill="#2a86d6"/>
  <g stroke="#e58aa0" stroke-width="4"><path d="M180,335 L262,292"/><path d="M196,362 L258,330"/><path d="M206,388 L268,354"/><path d="M222,412 L272,385"/></g>
  <g stroke="#7fb2e6" stroke-width="3"><path d="M188,349 L250,316"/><path d="M212,400 L262,372"/><path d="M292,300 L318,287"/><path d="M300,330 L322,318"/></g>
  <path d="M272,262 L282,257 L330,370 L320,376Z" fill="#f7f8fb"/>
  <!-- laptop base -->
  <path d="M203,482 L353,372 L490,418 L345,575Z" fill="#d2d2d5"/>
  <path d="M240,472 L362,388 L400,402 L292,508Z" fill="#38383c"/>
  <path d="M203,482 L345,575 L342,584 L200,490Z" fill="#9c9ca0"/>
  <!-- hands -->
  <path d="M378,425 C395,400 450,400 492,425 L490,455 C450,465 420,455 400,450Z" fill="#e7c5b0"/>
  <path d="M358,520 C370,495 410,490 440,510 L452,575 L430,600 C400,590 370,560 358,520Z" fill="#e3bca6"/>
  <!-- sleeve -->
  <path d="M440,580 C470,560 520,570 560,590 L640,585 L640,640 L440,640Z" fill="#97a3b2"/>
  <path d="M480,370 C500,340 525,340 530,370 L520,410 L485,405Z" fill="#dbc9c2"/>
  <!-- hair -->
  <path d="M492,112 C520,85 580,70 640,72 L640,610 C600,615 570,610 545,585 C520,575 500,545 495,520 C520,470 520,430 510,395 C480,350 470,300 475,250 C470,200 470,150 492,112Z" fill="url(#hair)"/>
  <path d="M510,130 C500,200 505,280 540,340 C560,400 540,470 520,520" fill="none" stroke="#b08a64" stroke-width="20" opacity=".8"/>
  <path d="M560,110 C545,200 560,300 590,380 C605,440 590,520 575,580" fill="none" stroke="#8d6546" stroke-width="14" opacity=".7"/>
  <path d="M610,100 C600,200 615,330 630,420" fill="none" stroke="#2e1e14" stroke-width="18" opacity=".6"/>
  <ellipse cx="58" cy="415" rx="20" ry="34" fill="#dcdad8"/><ellipse cx="128" cy="405" rx="22" ry="32" fill="#d2d0ce"/><ellipse cx="128" cy="378" rx="16" ry="6" fill="#6a625c"/>
  <!-- drive -->
  <path d="M72,482 L128,452 L168,505 L108,538Z" fill="#e8833a"/>
  <path d="M88,483 L126,463 L150,500 L112,520Z" fill="#e9e5e1"/>
  <path d="M150,515 C130,560 130,605 180,605 C235,605 230,560 212,520" fill="none" stroke="#1e1e20" stroke-width="4"/>
  <path d="M200,505 L235,510 L225,528 L205,524Z" fill="#3a3634"/>
  <path d="M40,530 L60,525 L62,575 L40,585Z" fill="#d9dde2"/>
</g>
</svg>
<svg class="ic" style="left:570.00px;top:179.80px;width:18px;height:18px" viewBox="0 0 24 24"><path fill="#00679e" fill-rule="nonzero" d="M19,3H5C3.89,3 3,3.89 3,5V19A2,2 0 0,0 5,21H19A2,2 0 0,0 21,19V5C21,3.89 20.1,3 19,3M19,5V19H5V5H19Z"/></svg>
<svg class="ic" style="left:673.60px;top:184.45px;width:15px;height:15px" viewBox="0 0 24 24"><path fill="#a56f00" stroke="#fff" stroke-width="7.6" paint-order="stroke" stroke-linejoin="round" d="M12,17.27L18.18,21L16.54,13.97L22,9.24L14.81,8.62L12,2L9.19,8.62L2,9.24L7.45,13.97L5.82,21L12,17.27Z"/></svg>
<div class="t" style="left:578.90px;top:308.09px;line-height:16px;height:16px;font-size:11px;color:#222;letter-spacing:0.097px">Nextcloud mai...</div>
<div class="t" style="left:661.40px;top:308.09px;line-height:16px;height:16px;font-size:11px;color:#6b6b6b;letter-spacing:0.150px">.jpg</div>
<div class="t" style="left:568.40px;top:324.72px;line-height:16px;height:16px;font-size:8.6px;color:#6b6b6b;letter-spacing:-0.330px">4 years ago</div>
<svg class="ic" style="left:678.75px;top:324.50px;width:15px;height:15px" viewBox="0 0 24 24"><path fill="#222" fill-rule="nonzero" d="M16,12A2,2 0 0,1 18,10A2,2 0 0,1 20,12A2,2 0 0,1 18,14A2,2 0 0,1 16,12M10,12A2,2 0 0,1 12,10A2,2 0 0,1 14,12A2,2 0 0,1 12,14A2,2 0 0,1 10,12M4,12A2,2 0 0,1 6,10A2,2 0 0,1 8,12A2,2 0 0,1 6,14A2,2 0 0,1 4,12Z"/></svg>
<svg class="ic" style="left:732.15px;top:197.60px;width:107.80px;height:85.90px" viewBox="2 4 20 16" preserveAspectRatio="none"><path fill="#00679e" d="M10,4H4C2.89,4 2,4.89 2,6V18A2,2 0 0,0 4,20H20A2,2 0 0,0 22,18V8C22,6.89 21.1,6 20,6H12L10,4Z"/></svg>
<svg class="ic" style="left:754.95px;top:210.30px;width:63px;height:63px" viewBox="0 0 24 24"><path fill="#fff" fill-rule="nonzero" d="M3.9,12C3.9,10.29 5.29,8.9 7,8.9H11V7H7A5,5 0 0,0 2,12A5,5 0 0,0 7,17H11V15.1H7C5.29,15.1 3.9,13.71 3.9,12M8,13H16V11H8V13M17,7H13V8.9H17C18.71,8.9 20.1,10.29 20.1,12C20.1,13.71 18.71,15.1 17,15.1H13V17H17A5,5 0 0,0 22,12A5,5 0 0,0 17,7Z"/></svg>
<svg class="ic" style="left:725.25px;top:179.80px;width:18px;height:18px" viewBox="0 0 24 24"><path fill="#00679e" fill-rule="nonzero" d="M19,3H5C3.89,3 3,3.89 3,5V19A2,2 0 0,0 5,21H19A2,2 0 0,0 21,19V5C21,3.89 20.1,3 19,3M19,5V19H5V5H19Z"/></svg>
<div class="t" style="left:734.40px;top:308.09px;line-height:16px;height:16px;font-size:11px;color:#222;letter-spacing:-0.460px">Camera</div>
<div class="t" style="left:723.65px;top:324.72px;line-height:16px;height:16px;font-size:8.6px;color:#6b6b6b;letter-spacing:-0.355px">5 years ago</div>
<svg class="ic" style="left:834.00px;top:324.50px;width:15px;height:15px" viewBox="0 0 24 24"><path fill="#222" fill-rule="nonzero" d="M16,12A2,2 0 0,1 18,10A2,2 0 0,1 20,12A2,2 0 0,1 18,14A2,2 0 0,1 16,12M10,12A2,2 0 0,1 12,10A2,2 0 0,1 14,12A2,2 0 0,1 12,14A2,2 0 0,1 10,12M4,12A2,2 0 0,1 6,10A2,2 0 0,1 8,12A2,2 0 0,1 6,14A2,2 0 0,1 4,12Z"/></svg>
<svg class="ic" style="left:887.40px;top:197.60px;width:107.80px;height:85.90px" viewBox="2 4 20 16" preserveAspectRatio="none"><path fill="#00679e" d="M10,4H4C2.89,4 2,4.89 2,6V18A2,2 0 0,0 4,20H20A2,2 0 0,0 22,18V8C22,6.89 21.1,6 20,6H12L10,4Z"/></svg>
<svg class="ic" style="left:910.20px;top:210.30px;width:63px;height:63px" viewBox="0 0 24 24"><path fill="#fff" fill-rule="nonzero" d="M15,14C12.33,14 7,15.33 7,18V20H23V18C23,15.33 17.67,14 15,14M6,10V7H4V10H1V12H4V15H6V12H9V10M15,12A4,4 0 0,0 19,8A4,4 0 0,0 15,4A4,4 0 0,0 11,8A4,4 0 0,0 15,12Z"/></svg>
<svg class="ic" style="left:880.50px;top:179.80px;width:18px;height:18px" viewBox="0 0 24 24"><path fill="#00679e" fill-rule="nonzero" d="M19,3H5C3.89,3 3,3.89 3,5V19A2,2 0 0,0 5,21H19A2,2 0 0,0 21,19V5C21,3.89 20.1,3 19,3M19,5V19H5V5H19Z"/></svg>
<div class="t" style="left:889.40px;top:308.09px;line-height:16px;height:16px;font-size:11px;color:#222;letter-spacing:-0.158px">Change-Prozess</div>
<div class="t" style="left:878.90px;top:324.72px;line-height:16px;height:16px;font-size:8.6px;color:#6b6b6b;letter-spacing:-0.164px">4 months ago</div>
<svg class="ic" style="left:989.25px;top:324.50px;width:15px;height:15px" viewBox="0 0 24 24"><path fill="#222" fill-rule="nonzero" d="M16,12A2,2 0 0,1 18,10A2,2 0 0,1 20,12A2,2 0 0,1 18,14A2,2 0 0,1 16,12M10,12A2,2 0 0,1 12,10A2,2 0 0,1 14,12A2,2 0 0,1 12,14A2,2 0 0,1 10,12M4,12A2,2 0 0,1 6,10A2,2 0 0,1 8,12A2,2 0 0,1 6,14A2,2 0 0,1 4,12Z"/></svg>
<svg class="ic" style="left:1042.65px;top:197.60px;width:107.80px;height:85.90px" viewBox="2 4 20 16" preserveAspectRatio="none"><path fill="#00679e" d="M10,4H4C2.89,4 2,4.89 2,6V18A2,2 0 0,0 4,20H20A2,2 0 0,0 22,18V8C22,6.89 21.1,6 20,6H12L10,4Z"/></svg>
<svg class="ic" style="left:1035.75px;top:179.80px;width:18px;height:18px" viewBox="0 0 24 24"><path fill="#00679e" fill-rule="nonzero" d="M19,3H5C3.89,3 3,3.89 3,5V19A2,2 0 0,0 5,21H19A2,2 0 0,0 21,19V5C21,3.89 20.1,3 19,3M19,5V19H5V5H19Z"/></svg>
<div class="t" style="left:1044.40px;top:308.09px;line-height:16px;height:16px;font-size:11px;color:#222;letter-spacing:-0.005px">Collectives</div>
<div class="t" style="left:1034.15px;top:324.72px;line-height:16px;height:16px;font-size:8.6px;color:#6b6b6b;letter-spacing:-0.089px">last month</div>
<svg class="ic" style="left:1144.50px;top:324.50px;width:15px;height:15px" viewBox="0 0 24 24"><path fill="#222" fill-rule="nonzero" d="M16,12A2,2 0 0,1 18,10A2,2 0 0,1 20,12A2,2 0 0,1 18,14A2,2 0 0,1 16,12M10,12A2,2 0 0,1 12,10A2,2 0 0,1 14,12A2,2 0 0,1 12,14A2,2 0 0,1 10,12M4,12A2,2 0 0,1 6,10A2,2 0 0,1 8,12A2,2 0 0,1 6,14A2,2 0 0,1 4,12Z"/></svg>
<svg class="ic" style="left:266.40px;top:382.10px;width:107.80px;height:85.90px" viewBox="2 4 20 16" preserveAspectRatio="none"><path fill="#00679e" d="M10,4H4C2.89,4 2,4.89 2,6V18A2,2 0 0,0 4,20H20A2,2 0 0,0 22,18V8C22,6.89 21.1,6 20,6H12L10,4Z"/></svg>
<svg class="ic" style="left:289.20px;top:394.80px;width:63px;height:63px" viewBox="0 0 24 24"><path fill="#fff" fill-rule="nonzero" d="M15,14C12.33,14 7,15.33 7,18V20H23V18C23,15.33 17.67,14 15,14M6,10V7H4V10H1V12H4V15H6V12H9V10M15,12A4,4 0 0,0 19,8A4,4 0 0,0 15,4A4,4 0 0,0 11,8A4,4 0 0,0 15,12Z"/></svg>
<svg class="ic" style="left:259.50px;top:364.30px;width:18px;height:18px" viewBox="0 0 24 24"><path fill="#00679e" fill-rule="nonzero" d="M19,3H5C3.89,3 3,3.89 3,5V19A2,2 0 0,0 5,21H19A2,2 0 0,0 21,19V5C21,3.89 20.1,3 19,3M19,5V19H5V5H19Z"/></svg>
<div class="t" style="left:268.15px;top:492.59px;line-height:16px;height:16px;font-size:11px;color:#222;letter-spacing:0.021px">Collectives (restor...</div>
<div class="t" style="left:258.15px;top:509.22px;line-height:16px;height:16px;font-size:8.6px;color:#6b6b6b;letter-spacing:-0.355px">3 years ago</div>
<svg class="ic" style="left:368.25px;top:509.00px;width:15px;height:15px" viewBox="0 0 24 24"><path fill="#222" fill-rule="nonzero" d="M16,12A2,2 0 0,1 18,10A2,2 0 0,1 20,12A2,2 0 0,1 18,14A2,2 0 0,1 16,12M10,12A2,2 0 0,1 12,10A2,2 0 0,1 14,12A2,2 0 0,1 12,14A2,2 0 0,1 10,12M4,12A2,2 0 0,1 6,10A2,2 0 0,1 8,12A2,2 0 0,1 6,14A2,2 0 0,1 4,12Z"/></svg>
<svg class="ic" style="left:421.65px;top:382.10px;width:107.80px;height:85.90px" viewBox="2 4 20 16" preserveAspectRatio="none"><path fill="#00679e" d="M10,4H4C2.89,4 2,4.89 2,6V18A2,2 0 0,0 4,20H20A2,2 0 0,0 22,18V8C22,6.89 21.1,6 20,6H12L10,4Z"/></svg>
<svg class="ic" style="left:444.45px;top:394.80px;width:63px;height:63px" viewBox="0 0 24 24"><path fill="#fff" fill-rule="nonzero" d="M3.9,12C3.9,10.29 5.29,8.9 7,8.9H11V7H7A5,5 0 0,0 2,12A5,5 0 0,0 7,17H11V15.1H7C5.29,15.1 3.9,13.71 3.9,12M8,13H16V11H8V13M17,7H13V8.9H17C18.71,8.9 20.1,10.29 20.1,12C20.1,13.71 18.71,15.1 17,15.1H13V17H17A5,5 0 0,0 22,12A5,5 0 0,0 17,7Z"/></svg>
<svg class="ic" style="left:414.75px;top:364.30px;width:18px;height:18px" viewBox="0 0 24 24"><path fill="#00679e" fill-rule="nonzero" d="M19,3H5C3.89,3 3,3.89 3,5V19A2,2 0 0,0 5,21H19A2,2 0 0,0 21,19V5C21,3.89 20.1,3 19,3M19,5V19H5V5H19Z"/></svg>
<div class="t" style="left:424.15px;top:492.59px;line-height:16px;height:16px;font-size:11px;color:#222;letter-spacing:-0.117px">Conference</div>
<div class="t" style="left:413.65px;top:509.22px;line-height:16px;height:16px;font-size:8.6px;color:#6b6b6b;letter-spacing:-0.232px">5 months ago</div>
<svg class="ic" style="left:523.50px;top:509.00px;width:15px;height:15px" viewBox="0 0 24 24"><path fill="#222" fill-rule="nonzero" d="M16,12A2,2 0 0,1 18,10A2,2 0 0,1 20,12A2,2 0 0,1 18,14A2,2 0 0,1 16,12M10,12A2,2 0 0,1 12,10A2,2 0 0,1 14,12A2,2 0 0,1 12,14A2,2 0 0,1 10,12M4,12A2,2 0 0,1 6,10A2,2 0 0,1 8,12A2,2 0 0,1 6,14A2,2 0 0,1 4,12Z"/></svg>
<svg class="ic" style="left:576.90px;top:382.10px;width:107.80px;height:85.90px" viewBox="2 4 20 16" preserveAspectRatio="none"><path fill="#00679e" d="M10,4H4C2.89,4 2,4.89 2,6V18A2,2 0 0,0 4,20H20A2,2 0 0,0 22,18V8C22,6.89 21.1,6 20,6H12L10,4Z"/></svg>
<svg class="ic" style="left:599.70px;top:394.80px;width:63px;height:63px" viewBox="0 0 24 24"><path fill="#fff" fill-rule="nonzero" d="M15,14C12.33,14 7,15.33 7,18V20H23V18C23,15.33 17.67,14 15,14M6,10V7H4V10H1V12H4V15H6V12H9V10M15,12A4,4 0 0,0 19,8A4,4 0 0,0 15,4A4,4 0 0,0 11,8A4,4 0 0,0 15,12Z"/></svg>
<svg class="ic" style="left:570.00px;top:364.30px;width:18px;height:18px" viewBox="0 0 24 24"><path fill="#00679e" fill-rule="nonzero" d="M19,3H5C3.89,3 3,3.89 3,5V19A2,2 0 0,0 5,21H19A2,2 0 0,0 21,19V5C21,3.89 20.1,3 19,3M19,5V19H5V5H19Z"/></svg>
<div class="t" style="left:579.15px;top:492.59px;line-height:16px;height:16px;font-size:11px;color:#222;letter-spacing:0.106px">Corinne documents</div>
<div class="t" style="left:568.15px;top:509.22px;line-height:16px;height:16px;font-size:8.6px;color:#6b6b6b;letter-spacing:-0.305px">5 years ago</div>
<svg class="ic" style="left:678.75px;top:509.00px;width:15px;height:15px" viewBox="0 0 24 24"><path fill="#222" fill-rule="nonzero" d="M16,12A2,2 0 0,1 18,10A2,2 0 0,1 20,12A2,2 0 0,1 18,14A2,2 0 0,1 16,12M10,12A2,2 0 0,1 12,10A2,2 0 0,1 14,12A2,2 0 0,1 12,14A2,2 0 0,1 10,12M4,12A2,2 0 0,1 6,10A2,2 0 0,1 8,12A2,2 0 0,1 6,14A2,2 0 0,1 4,12Z"/></svg>
<svg class="ic" style="left:732.15px;top:382.10px;width:107.80px;height:85.90px" viewBox="2 4 20 16" preserveAspectRatio="none"><path fill="#00679e" d="M10,4H4C2.89,4 2,4.89 2,6V18A2,2 0 0,0 4,20H20A2,2 0 0,0 22,18V8C22,6.89 21.1,6 20,6H12L10,4Z"/></svg>
<svg class="ic" style="left:725.25px;top:364.30px;width:18px;height:18px" viewBox="0 0 24 24"><path fill="#00679e" fill-rule="nonzero" d="M19,3H5C3.89,3 3,3.89 3,5V19A2,2 0 0,0 5,21H19A2,2 0 0,0 21,19V5C21,3.89 20.1,3 19,3M19,5V19H5V5H19Z"/></svg>
<div class="t" style="left:733.90px;top:492.59px;line-height:16px;height:16px;font-size:11px;color:#222;letter-spacing:-0.183px">Deck</div>
<div class="t" style="left:723.65px;top:509.22px;line-height:16px;height:16px;font-size:8.6px;color:#6b6b6b;letter-spacing:-0.186px">9 months ago</div>
<svg class="ic" style="left:834.00px;top:509.00px;width:15px;height:15px" viewBox="0 0 24 24"><path fill="#222" fill-rule="nonzero" d="M16,12A2,2 0 0,1 18,10A2,2 0 0,1 20,12A2,2 0 0,1 18,14A2,2 0 0,1 16,12M10,12A2,2 0 0,1 12,10A2,2 0 0,1 14,12A2,2 0 0,1 12,14A2,2 0 0,1 10,12M4,12A2,2 0 0,1 6,10A2,2 0 0,1 8,12A2,2 0 0,1 6,14A2,2 0 0,1 4,12Z"/></svg>
<svg class="ic" style="left:887.40px;top:382.10px;width:107.80px;height:85.90px" viewBox="2 4 20 16" preserveAspectRatio="none"><path fill="#00679e" d="M10,4H4C2.89,4 2,4.89 2,6V18A2,2 0 0,0 4,20H20A2,2 0 0,0 22,18V8C22,6.89 21.1,6 20,6H12L10,4Z"/></svg>
<svg class="ic" style="left:880.50px;top:364.30px;width:18px;height:18px" viewBox="0 0 24 24"><path fill="#00679e" fill-rule="nonzero" d="M19,3H5C3.89,3 3,3.89 3,5V19A2,2 0 0,0 5,21H19A2,2 0 0,0 21,19V5C21,3.89 20.1,3 19,3M19,5V19H5V5H19Z"/></svg>
<div class="t" style="left:888.90px;top:492.59px;line-height:16px;height:16px;font-size:11px;color:#222;letter-spacing:-0.087px">Economics 101</div>
<div class="t" style="left:878.90px;top:509.22px;line-height:16px;height:16px;font-size:8.6px;color:#6b6b6b;letter-spacing:-0.164px">4 months ago</div>
<svg class="ic" style="left:989.25px;top:509.00px;width:15px;height:15px" viewBox="0 0 24 24"><path fill="#222" fill-rule="nonzero" d="M16,12A2,2 0 0,1 18,10A2,2 0 0,1 20,12A2,2 0 0,1 18,14A2,2 0 0,1 16,12M10,12A2,2 0 0,1 12,10A2,2 0 0,1 14,12A2,2 0 0,1 12,14A2,2 0 0,1 10,12M4,12A2,2 0 0,1 6,10A2,2 0 0,1 8,12A2,2 0 0,1 6,14A2,2 0 0,1 4,12Z"/></svg>
<svg class="ic" style="left:1042.65px;top:382.10px;width:107.80px;height:85.90px" viewBox="2 4 20 16" preserveAspectRatio="none"><path fill="#00679e" d="M10,4H4C2.89,4 2,4.89 2,6V18A2,2 0 0,0 4,20H20A2,2 0 0,0 22,18V8C22,6.89 21.1,6 20,6H12L10,4Z"/></svg>
<svg class="ic" style="left:1065.45px;top:394.80px;width:63px;height:63px" viewBox="0 0 24 24"><path fill="#fff" fill-rule="nonzero" d="M15,14C12.33,14 7,15.33 7,18V20H23V18C23,15.33 17.67,14 15,14M6,10V7H4V10H1V12H4V15H6V12H9V10M15,12A4,4 0 0,0 19,8A4,4 0 0,0 15,4A4,4 0 0,0 11,8A4,4 0 0,0 15,12Z"/></svg>
<svg class="ic" style="left:1035.75px;top:364.30px;width:18px;height:18px" viewBox="0 0 24 24"><path fill="#00679e" fill-rule="nonzero" d="M19,3H5C3.89,3 3,3.89 3,5V19A2,2 0 0,0 5,21H19A2,2 0 0,0 21,19V5C21,3.89 20.1,3 19,3M19,5V19H5V5H19Z"/></svg>
<div class="t" style="left:1044.40px;top:492.59px;line-height:16px;height:16px;font-size:11px;color:#222;letter-spacing:0.068px">Energy provider</div>
<div class="t" style="left:1034.65px;top:509.22px;line-height:16px;height:16px;font-size:8.6px;color:#6b6b6b;letter-spacing:-0.233px">12 months ago</div>
<svg class="ic" style="left:1144.50px;top:509.00px;width:15px;height:15px" viewBox="0 0 24 24"><path fill="#222" fill-rule="nonzero" d="M16,12A2,2 0 0,1 18,10A2,2 0 0,1 20,12A2,2 0 0,1 18,14A2,2 0 0,1 16,12M10,12A2,2 0 0,1 12,10A2,2 0 0,1 14,12A2,2 0 0,1 12,14A2,2 0 0,1 10,12M4,12A2,2 0 0,1 6,10A2,2 0 0,1 8,12A2,2 0 0,1 6,14A2,2 0 0,1 4,12Z"/></svg>
<svg class="ic" style="left:266.40px;top:566.60px;width:107.80px;height:85.90px" viewBox="2 4 20 16" preserveAspectRatio="none"><path fill="#00679e" d="M10,4H4C2.89,4 2,4.89 2,6V18A2,2 0 0,0 4,20H20A2,2 0 0,0 22,18V8C22,6.89 21.1,6 20,6H12L10,4Z"/></svg>
<svg class="ic" style="left:289.20px;top:579.30px;width:63px;height:63px" viewBox="0 0 24 24"><path fill="#fff" fill-rule="nonzero" d="M12,5.5A3.5,3.5 0 0,1 15.5,9A3.5,3.5 0 0,1 12,12.5A3.5,3.5 0 0,1 8.5,9A3.5,3.5 0 0,1 12,5.5M5,8C5.56,8 6.08,8.15 6.53,8.42C6.38,9.85 6.8,11.27 7.66,12.38C7.16,13.34 6.16,14 5,14A3,3 0 0,1 2,11A3,3 0 0,1 5,8M19,8A3,3 0 0,1 22,11A3,3 0 0,1 19,14C17.84,14 16.84,13.34 16.34,12.38C17.2,11.27 17.62,9.85 17.47,8.42C17.92,8.15 18.44,8 19,8M5.5,18.25C5.5,16.18 8.41,14.5 12,14.5C15.59,14.5 18.5,16.18 18.5,18.25V20H5.5V18.25M0,20V18.5C0,17.11 1.89,15.94 4.45,15.6C3.86,16.28 3.5,17.22 3.5,18.25V20H0M24,20H20.5V18.25C20.5,17.22 20.14,16.28 19.55,15.6C22.11,15.94 24,17.11 24,18.5V20Z"/></svg>
<svg class="ic" style="left:259.50px;top:548.80px;width:18px;height:18px" viewBox="0 0 24 24"><path fill="#00679e" fill-rule="nonzero" d="M19,3H5C3.89,3 3,3.89 3,5V19A2,2 0 0,0 5,21H19A2,2 0 0,0 21,19V5C21,3.89 20.1,3 19,3M19,5V19H5V5H19Z"/></svg>
<svg class="ic" style="left:421.65px;top:566.60px;width:107.80px;height:85.90px" viewBox="2 4 20 16" preserveAspectRatio="none"><path fill="#00679e" d="M10,4H4C2.89,4 2,4.89 2,6V18A2,2 0 0,0 4,20H20A2,2 0 0,0 22,18V8C22,6.89 21.1,6 20,6H12L10,4Z"/></svg>
<svg class="ic" style="left:414.75px;top:548.80px;width:18px;height:18px" viewBox="0 0 24 24"><path fill="#00679e" fill-rule="nonzero" d="M19,3H5C3.89,3 3,3.89 3,5V19A2,2 0 0,0 5,21H19A2,2 0 0,0 21,19V5C21,3.89 20.1,3 19,3M19,5V19H5V5H19Z"/></svg>
<svg class="ic" style="left:576.90px;top:566.60px;width:107.80px;height:85.90px" viewBox="2 4 20 16" preserveAspectRatio="none"><path fill="#00679e" d="M10,4H4C2.89,4 2,4.89 2,6V18A2,2 0 0,0 4,20H20A2,2 0 0,0 22,18V8C22,6.89 21.1,6 20,6H12L10,4Z"/></svg>
<svg class="ic" style="left:599.70px;top:579.30px;width:63px;height:63px" viewBox="0 0 24 24"><path fill="#fff" fill-rule="nonzero" d="M15,14C12.33,14 7,15.33 7,18V20H23V18C23,15.33 17.67,14 15,14M6,10V7H4V10H1V12H4V15H6V12H9V10M15,12A4,4 0 0,0 19,8A4,4 0 0,0 15,4A4,4 0 0,0 11,8A4,4 0 0,0 15,12Z"/></svg>
<svg class="ic" style="left:570.00px;top:548.80px;width:18px;height:18px" viewBox="0 0 24 24"><path fill="#00679e" fill-rule="nonzero" d="M19,3H5C3.89,3 3,3.89 3,5V19A2,2 0 0,0 5,21H19A2,2 0 0,0 21,19V5C21,3.89 20.1,3 19,3M19,5V19H5V5H19Z"/></svg>
<svg class="ic" style="left:732.15px;top:566.60px;width:107.80px;height:85.90px" viewBox="2 4 20 16" preserveAspectRatio="none"><path fill="#00679e" d="M10,4H4C2.89,4 2,4.89 2,6V18A2,2 0 0,0 4,20H20A2,2 0 0,0 22,18V8C22,6.89 21.1,6 20,6H12L10,4Z"/></svg>
<svg class="ic" style="left:725.25px;top:548.80px;width:18px;height:18px" viewBox="0 0 24 24"><path fill="#00679e" fill-rule="nonzero" d="M19,3H5C3.89,3 3,3.89 3,5V19A2,2 0 0,0 5,21H19A2,2 0 0,0 21,19V5C21,3.89 20.1,3 19,3M19,5V19H5V5H19Z"/></svg>
<svg class="ic" style="left:887.40px;top:566.60px;width:107.80px;height:85.90px" viewBox="2 4 20 16" preserveAspectRatio="none"><path fill="#00679e" d="M10,4H4C2.89,4 2,4.89 2,6V18A2,2 0 0,0 4,20H20A2,2 0 0,0 22,18V8C22,6.89 21.1,6 20,6H12L10,4Z"/></svg>
<svg class="ic" style="left:880.50px;top:548.80px;width:18px;height:18px" viewBox="0 0 24 24"><path fill="#00679e" fill-rule="nonzero" d="M19,3H5C3.89,3 3,3.89 3,5V19A2,2 0 0,0 5,21H19A2,2 0 0,0 21,19V5C21,3.89 20.1,3 19,3M19,5V19H5V5H19Z"/></svg>
<svg class="ic" style="left:1042.65px;top:566.60px;width:107.80px;height:85.90px" viewBox="2 4 20 16" preserveAspectRatio="none"><path fill="#00679e" d="M10,4H4C2.89,4 2,4.89 2,6V18A2,2 0 0,0 4,20H20A2,2 0 0,0 22,18V8C22,6.89 21.1,6 20,6H12L10,4Z"/></svg>
<svg class="ic" style="left:1035.75px;top:548.80px;width:18px;height:18px" viewBox="0 0 24 24"><path fill="#00679e" fill-rule="nonzero" d="M19,3H5C3.89,3 3,3.89 3,5V19A2,2 0 0,0 5,21H19A2,2 0 0,0 21,19V5C21,3.89 20.1,3 19,3M19,5V19H5V5H19Z"/></svg>
<svg class="ic" style="left:0;top:0;width:1200px;height:675px" viewBox="0 0 1200 675" shape-rendering="crispEdges"><rect x="3" y="3" width="1195" height="1" fill="#0a5785"/><rect x="3" y="3" width="1" height="670" fill="#0a5785"/><rect x="0" y="0" width="1200" height="3" fill="#e8fbfd"/><rect x="0" y="0" width="3" height="675" fill="#e8fbfd"/><rect x="0" y="0" width="1200" height="2" fill="#c3c9cf"/><rect x="0" y="0" width="2" height="675" fill="#c3c9cf"/><rect x="0" y="0" width="1200" height="1" fill="#fff"/><rect x="0" y="0" width="1" height="675" fill="#fff"/><rect x="1198" y="2" width="2" height="673" fill="#f6fdfd"/><rect x="2" y="673" width="1198" height="2" fill="#f6fdfd"/><rect x="1199" y="1" width="1" height="674" fill="#c9cdd0"/><rect x="1" y="674" width="1199" height="1" fill="#c9cdd0"/></svg>
</body></html>
